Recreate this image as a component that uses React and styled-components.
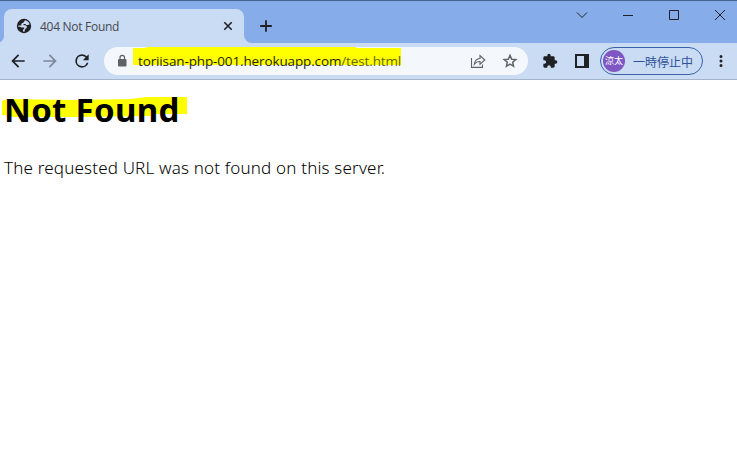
import React from "react";
import styled, { createGlobalStyle } from "styled-components";

const GlobalStyle = createGlobalStyle`
  * { box-sizing: border-box; }
  html, body { margin: 0; background: #fff; overflow: hidden; }
  svg { display: block; flex: none; }
`;

const Window = styled.div`
  width: 737px;
  height: 473px;
  display: flex;
  flex-direction: column;
  font-family: "Open Sans", "Noto Sans CJK JP", sans-serif;
  white-space: nowrap;
`;

const TabStrip = styled.header`
  height: 43px;
  flex: none;
  display: flex;
  align-items: flex-end;
  background: #86ace9;
  border-top: 1px solid #45618f;
`;

const TabFoot = styled.svg`
  fill: #cadbf4;
`;

const Tab = styled.div`
  width: 240px;
  height: 34px;
  display: flex;
  align-items: center;
  padding: 0 8px 0 12px;
  background: #cadbf4;
  border-radius: 8px 8px 0 0;
`;

const TabTitle = styled.span`
  flex: 1;
  margin: 2px 0 0 8px;
  font-size: 12px;
  line-height: 16px;
  letter-spacing: ${(p) => p.$spacing}px;
  color: #45494f;
`;

const IconButton = styled.button`
  width: ${(p) => p.$w || 32}px;
  height: ${(p) => p.$h || 28}px;
  flex: none;
  padding: 0;
  border: 0;
  background: transparent;
  color: ${(p) => p.$color || "#202124"};
  display: flex;
  align-items: center;
  justify-content: center;
`;

const WindowControls = styled.div`
  margin-left: auto;
  align-self: flex-start;
  display: flex;
  margin-right: -6px;
`;

const Toolbar = styled.nav`
  height: 37px;
  flex: none;
  display: flex;
  align-items: center;
  padding-left: 2px;
  background: #cadbf4;
  border-bottom: 1px solid #a6b4ca;
`;

const Omnibox = styled.div`
  position: relative;
  width: 424px;
  height: 28px;
  margin: 0 6px;
  padding: 0 2px 0 10px;
  display: flex;
  align-items: center;
  border-radius: 14px;
  background: #f4f8fd;
`;

const Marker = styled.svg`
  position: absolute;
  left: ${(p) => p.$x}px;
  top: ${(p) => p.$y}px;
  fill: #ff0;
`;

const Url = styled.span`
  position: relative;
  flex: 1;
  margin-left: 8px;
  font-size: 13.5px;
  line-height: 20px;
  letter-spacing: -0.13px;
  color: #25260f;
`;

const UrlPath = styled.span`
  color: #66680c;
`;

const Profile = styled.button`
  width: 103px;
  height: 28px;
  margin: 0 2px;
  padding: 0 0 0 2px;
  display: flex;
  align-items: center;
  border: 1px solid #3b62a8;
  border-radius: 14px;
  background: #cadbf4;
  color: #2e5299;
  font-family: "Noto Sans CJK JP", sans-serif;
  font-size: 12px;
`;

const Avatar = styled.span`
  width: 22px;
  height: 22px;
  margin-right: 8px;
  flex: none;
  display: flex;
  align-items: center;
  justify-content: center;
  border-radius: 50%;
  background: #7e57c2;
  color: #fff;
  font-size: 9px;
  line-height: 22px;
`;

const Page = styled.main`
  position: relative;
  flex: 1;
  padding: 5px 4px;
  background: #fff;
  color: #000;
  font-family: "Noto Sans", sans-serif;
`;

const Heading = styled.h1`
  position: relative;
  margin: 0;
  font-size: 33px;
  font-weight: 700;
  line-height: 50px;
  letter-spacing: 0.3px;
`;

const Message = styled.p`
  margin: 20px 0 0;
  font-weight: 300;
  font-size: 17px;
  line-height: 26px;
  letter-spacing: 0.18px;
`;

function Tool({ d, size = 20, ...rest }) {
  return (
    <IconButton {...rest}>
      <svg width={size} height={size} viewBox="0 0 24 24" fill="currentColor">
        <path d={d} />
      </svg>
    </IconButton>
  );
}

function Line({ d, width = 1, ...rest }) {
  return (
    <IconButton {...rest}>
      <svg width="16" height="16" viewBox="0 0 16 16" fill="none" stroke="currentColor" strokeWidth={width}>
        <path d={d} />
      </svg>
    </IconButton>
  );
}

export default function App() {
  return (
    <>
      <GlobalStyle />
      <Window>
        <TabStrip>
          <TabFoot width="4" height="34" viewBox="0 0 4 34">
            <path d="M4 26C4 30 2.500 32 0 33.300V34H4Z" />
          </TabFoot>
          <Tab>
            <svg width="16" height="16" viewBox="0 0 16 16">
              <circle cx="8" cy="8" r="7.200" fill="#202124" />
              <path d="M9 2.300C11.200 2.700 13 4.200 13.600 6.200L12.200 7H10.300L9.300 6H7.500V7.200H9.800L11 8.800 10.200 10.500 9 11 8.500 13.700 7 13.500V11.800L8.200 10.800V9.500H5.500L4.200 8.800H2.300V7.500H5.200L5.500 5.500 7.500 4.500Z" fill="#cadbf4" />
            </svg>
            <TabTitle $spacing={-0.28}>404 Not Found</TabTitle>
            <Line $w={16} $h={16} width={1.6} d="M4.300 4.300 11.700 11.700M11.700 4.300 4.300 11.700" />
          </Tab>
          <TabFoot width="8" height="34" viewBox="0 0 8 34">
            <path d="M0 26A8 8 0 0 0 8 34H0Z" />
          </TabFoot>
          <Line $w={28} $h={34} width={1.8} d="M8 2.200V13.800M2.200 8H13.800" />
          <WindowControls>
            <Line $w={46} d="M3 5.500 8 10.500 13 5.500" />
            <Line $w={46} d="M3 8.500H13" />
            <Line $w={46} d="M3.500 3.500H12.500V12.500H3.500Z" />
            <Line $w={46} d="M3 3 13 13M13 3 3 13" />
          </WindowControls>
        </TabStrip>
        <Toolbar>
          <Tool d="M20 11H7.830l5.590-5.590L12 4l-8 8 8 8 1.410-1.410L7.830 13H20v-2z" />
          <Tool $color="#7d8999" d="M12 4l-1.410 1.410L16.170 11H4v2h12.170l-5.580 5.590L12 20l8-8z" />
          <Tool d="M17.650 6.350A7.958 7.958 0 0 0 12 4a8 8 0 1 0 7.730 10h-2.080A6 6 0 1 1 12 6c1.660 0 3.140.69 4.220 1.780L13 11h7V4l-2.350 2.350z" />
          <Omnibox>
            <Marker $x={29} $y={0} width="270" height="20" viewBox="0 0 270 20">
              <path d="M0 1H13V0H223V1H268V18H0Z" />
            </Marker>
            <IconButton $w={16} $color="#5f6368">
              <svg width="12" height="14" viewBox="0 0 12 14">
                <rect x="2" y="5" width="8.500" height="7.500" rx="1" fill="currentColor" />
                <path d="M4 5.500V3.700a2.250 2.250 0 0 1 4.500 0v1.800" fill="none" stroke="currentColor" strokeWidth="1.200" />
              </svg>
            </IconButton>
            <Url>toriisan-php-001.herokuapp.com<UrlPath>/test.html</UrlPath></Url>
            <Line
              $color="#5f6368"
              width={1.1}
              d="M1.500 5V14.400H12.500V11.500M4.300 11.200C4.700 7.800 6.700 5.800 10 5.500V2.600L14.800 7 10 11.200V8.500C7.500 8.500 5.700 9.300 4.300 11.200Z"
            />
            <IconButton $color="#5f6368">
              <svg width="16" height="16" viewBox="0 0 16 16" fill="none" stroke="currentColor" strokeWidth="1.500">
                <path d="M8 2.400 9.700 6.200 13.800 6.600 10.700 9.300 11.600 13.300 8 11.200 4.400 13.300 5.300 9.300 2.200 6.600 6.300 6.200Z" />
              </svg>
            </IconButton>
          </Omnibox>
          <Tool
            size={16}
            d="M20.500 11H19V7c0-1.100-.9-2-2-2h-4V3.500a2.500 2.500 0 0 0-5 0V5H4c-1.100 0-2 .9-2 2v3.800h1.500a2.700 2.700 0 0 1 0 5.400H2V20c0 1.100.9 2 2 2h3.800v-1a2.700 2.700 0 0 1 5.400 0V22H17c1.100 0 2-.9 2-2v-4h1.500a2.500 2.500 0 0 0 0-5z"
          />
          <IconButton>
            <svg width="14" height="14" viewBox="0 0 14 14">
              <path d="M0 0H14V14H0ZM2 2V12H9V2Z" fill="currentColor" fillRule="evenodd" />
            </svg>
          </IconButton>
          <Profile>
            <Avatar>涼太</Avatar>
            一時停止中
          </Profile>
          <Tool size={18} d="M12 8a2 2 0 1 0 0-4 2 2 0 0 0 0 4zm0 2a2 2 0 1 0 0 4 2 2 0 0 0 0-4zm0 6a2 2 0 1 0 0 4 2 2 0 0 0 0-4z" />
        </Toolbar>
        <Page>
          <Marker $x={2} $y={17} width="186" height="21" viewBox="0 0 186 21">
            <path d="M0 4 5 2 73 3 128 2 145 0H185V17H151V19L73 20H10V19L0 18Z" />
          </Marker>
          <Heading>Not Found</Heading>
          <Message>The requested URL was not found on this server.</Message>
        </Page>
      </Window>
    </>
  );
}
